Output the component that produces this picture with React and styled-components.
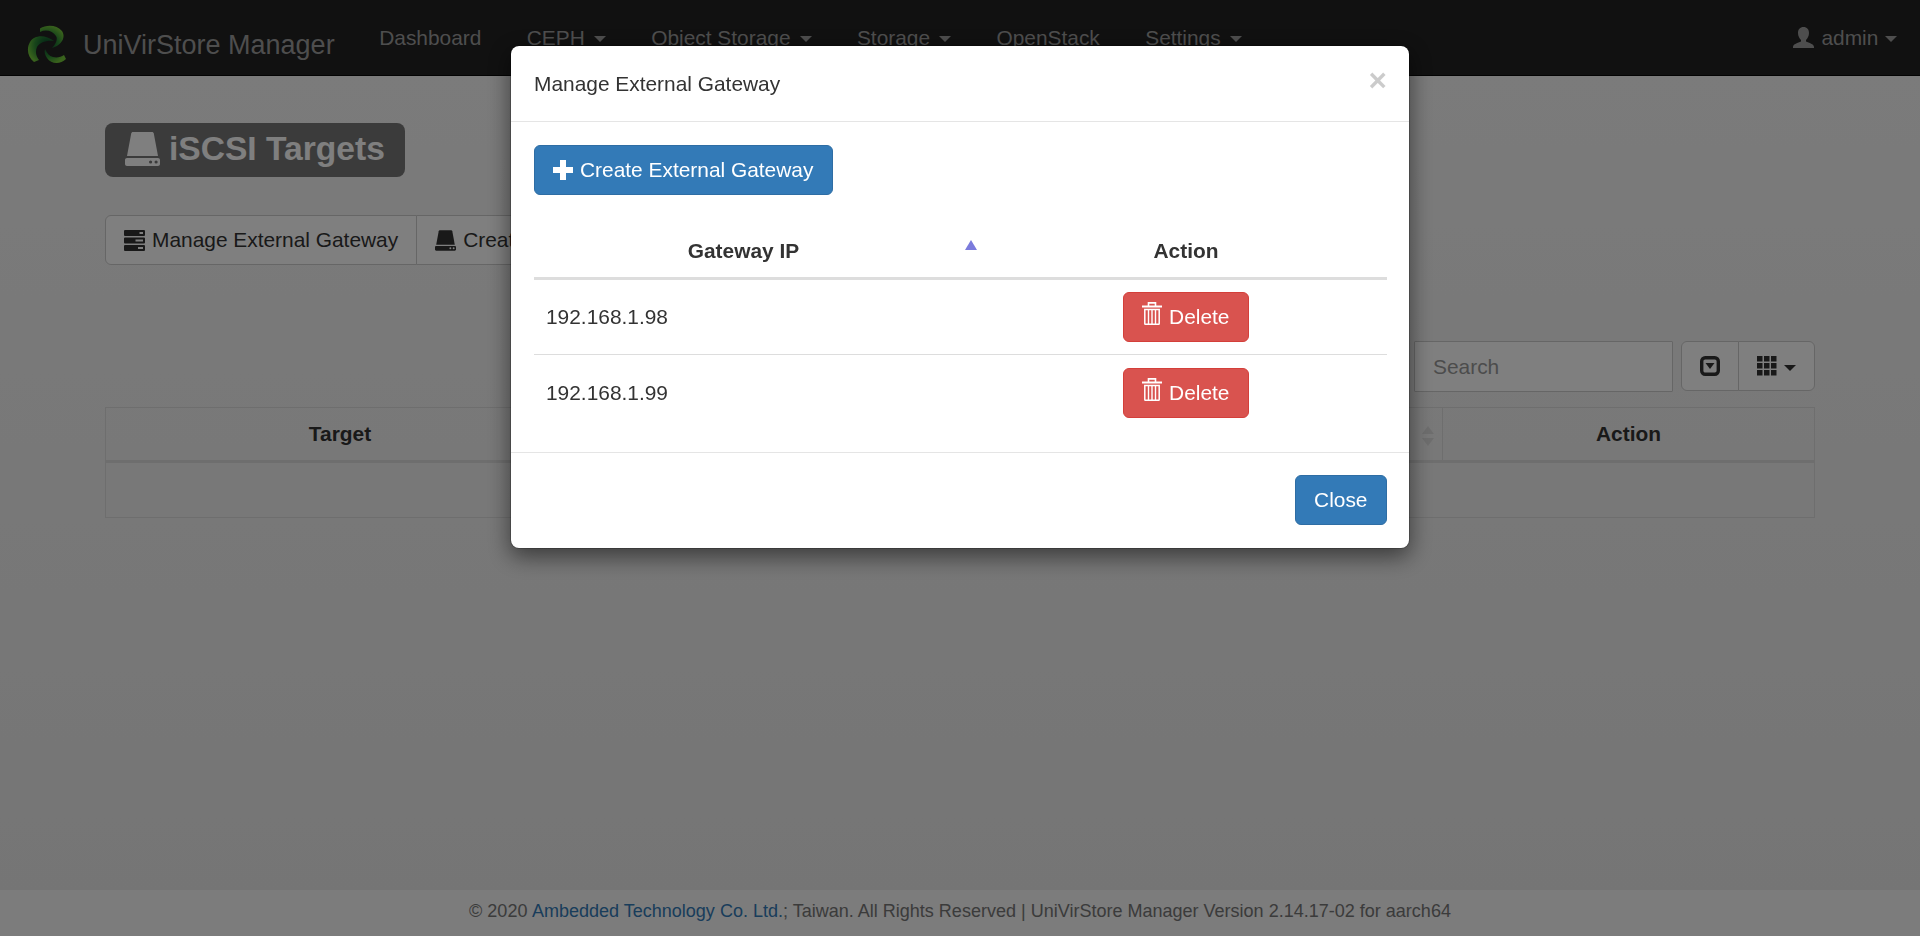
import React from "react";
import styled, { createGlobalStyle } from "styled-components";

const Global = createGlobalStyle`
  html, body { margin: 0; padding: 0; height: 100%; }
  body {
    font-family: "Liberation Sans", Arial, sans-serif;
    font-size: 20.9px;
    line-height: 30px;
    color: #333;
    background: #f5f5f5;
    overflow: hidden;
  }
  * { box-sizing: border-box; }
`;

const Page = styled.div`
  min-height: 936px;
  display: flex;
  flex-direction: column;
`;

const Navbar = styled.nav`
  height: 76px;
  background: #222;
  border-bottom: 1px solid #080808;
  display: flex;
  align-items: flex-start;
`;

const Brand = styled.a`
  display: flex;
  align-items: center;
  height: 75px;
  padding: 14px 0 0 27px;
  gap: 16px;
  color: #9d9d9d;
  font-size: 27px;
  width: 356.5px;
  white-space: nowrap;
`;

const NavList = styled.ul`
  display: flex;
  list-style: none;
  margin: 0;
  padding: 0;
  flex: 1;
`;

const NavItem = styled.li`
  padding: 22.5px 22.7px;
  color: #9d9d9d;
  display: flex;
  align-items: center;
  gap: ${(p) => (p.$gap ? p.$gap : 9)}px;
  white-space: nowrap;
`;

const Caret = styled.span`
  display: inline-block;
  width: 0;
  height: 0;
  margin-top: 3px;
  border-top: 6px solid ${(p) => p.$color || "currentColor"};
  border-left: 6px solid transparent;
  border-right: 6px solid transparent;
`;

const Main = styled.main`
  flex: 1;
  padding: 47px 105px 0;
  background: linear-gradient(#f6f6f6, #ebebeb);
`;

const TitleLabel = styled.h1`
  display: inline-flex;
  align-items: center;
  gap: 9px;
  height: 54px;
  margin: 0;
  padding: 0 20px 2px;
  border-radius: 8px;
  background: #777;
  color: #fff;
  font-size: 33.6px;
  font-weight: 700;
  vertical-align: top;
`;

const ActionGroup = styled.div`
  display: flex;
  margin-top: 38px;
  height: 50px;
`;

const GroupButton = styled.button`
  display: flex;
  align-items: center;
  gap: 7px;
  height: 50px;
  padding: 0 18px;
  margin-left: -1px;
  background: #fff;
  border: 1px solid #ccc;
  color: #333;
  font: inherit;
  white-space: nowrap;
  &:first-child { margin-left: 0; border-radius: 6px 0 0 6px; }
  &:last-child { border-radius: 0 6px 6px 0; }
`;

const Toolbar = styled.div`
  display: flex;
  justify-content: flex-end;
  align-items: flex-start;
  gap: 8px;
  margin-top: 76px;
`;

const SearchInput = styled.input`
  width: 259px;
  height: 51px;
  padding: 0 18px;
  background: #fff;
  border: 1px solid #ccc;
  border-radius: 1px;
  color: #555;
  font: inherit;
  &::placeholder { color: #999; opacity: 1; }
`;

const ToolGroup = styled.div`
  display: flex;
  height: 50px;
`;

const ToolButton = styled.button`
  display: flex;
  align-items: center;
  justify-content: center;
  gap: 7px;
  width: ${(p) => p.$width}px;
  height: 50px;
  margin-left: -1px;
  padding: 0;
  background: #fff;
  border: 1px solid #ccc;
  color: #333;
  &:first-child { margin-left: 0; border-radius: 6px 0 0 6px; }
  &:last-child { border-radius: 0 6px 6px 0; }
`;

const TargetTable = styled.table`
  width: 100%;
  margin-top: 15px;
  border-collapse: collapse;
  table-layout: fixed;
  border: 1px solid #ddd;
`;

const TargetHead = styled.th`
  position: relative;
  width: ${(p) => p.$width || "auto"};
  height: 54px;
  padding: 0;
  border: 1px solid #ddd;
  border-bottom: 3px solid #ddd;
  font-weight: 700;
  text-align: center;
`;

const TargetCell = styled.td`
  height: 56px;
  border: 1px solid #ddd;
`;

const SortBoth = styled.svg`
  position: absolute;
  right: 8px;
  top: 18px;
`;

const Footer = styled.footer`
  height: 46px;
  padding-bottom: 5px;
  background: #f8f8f8;
  display: flex;
  align-items: center;
  justify-content: center;
  font-size: 18.03px;
  color: #777;
  white-space: nowrap;
`;

const FooterLink = styled.a`
  color: #337ab7;
  margin-left: 0.25em;
`;

const Backdrop = styled.div`
  position: fixed;
  inset: 0;
  background: #000;
  opacity: 0.5;
`;

const Modal = styled.div`
  position: fixed;
  top: 45px;
  left: 510px;
  width: 900px;
  background: #fff;
  background-clip: padding-box;
  border: 1px solid rgba(0, 0, 0, 0.2);
  border-radius: 9px;
  box-shadow: 0 7.5px 22.5px rgba(0, 0, 0, 0.5);
`;

const ModalHeader = styled.header`
  display: flex;
  justify-content: space-between;
  align-items: center;
  height: 76px;
  padding: 0 22px 0 23px;
  border-bottom: 1px solid #e5e5e5;
`;

const ModalTitle = styled.h4`
  margin: 0;
  font-size: 20.9px;
  font-weight: 400;
  color: #333;
`;

const CloseX = styled.button`
  padding: 0;
  margin-top: -5px;
  background: none;
  border: 0;
  color: #000;
  opacity: 0.2;
  font-family: inherit;
  font-size: 31.5px;
  font-weight: 700;
  line-height: 1;
`;

const ModalBody = styled.div`
  padding: 23px 22px 22px 23px;
`;

const Button = styled.button`
  display: inline-flex;
  align-items: center;
  gap: ${(p) => p.$gap || 0}px;
  height: 50px;
  padding: 0 18.5px 0 18px;
  background: ${(p) => (p.$danger ? "#d9534f" : "#337ab7")};
  border: 1px solid ${(p) => (p.$danger ? "#d43f3a" : "#2e6da4")};
  border-radius: 6px;
  color: #fff;
  font: inherit;
  white-space: nowrap;
`;

const GatewayTable = styled.table`
  width: 100%;
  margin-top: 28px;
  border-collapse: collapse;
  table-layout: fixed;
`;

const GatewayHead = styled.th`
  position: relative;
  width: ${(p) => p.$width || "auto"};
  height: 55px;
  padding: 2px ${(p) => p.$right || 12}px 0 12px;
  border-bottom: 3px solid #ddd;
  font-weight: 700;
  text-align: center;
`;

const SortAsc = styled.svg`
  position: absolute;
  left: 431px;
  top: 17px;
`;

const GatewayRow = styled.tr`
  border-bottom: 1px solid #ddd;
  &:last-child { border-bottom: 0; }
`;

const GatewayCell = styled.td`
  height: 76px;
  padding: 1px 12px 0;
  text-align: ${(p) => p.$align || "left"};
  vertical-align: middle;
`;

const ModalFooter = styled.div`
  display: flex;
  justify-content: flex-end;
  padding: 22px 22px 23px 23px;
  border-top: 1px solid #e5e5e5;
`;

const RaisedIcon = styled.svg`
  margin-bottom: 7px;
`;

const Logo = () => (
  <svg width="40" height="40" viewBox="0 0 40 40" aria-hidden="true">
    <defs>
      <radialGradient id="swirl" gradientUnits="userSpaceOnUse" cx="20" cy="20" r="20">
        <stop offset="0.1" stopColor="#0a4a2c" />
        <stop offset="0.6" stopColor="#2f8a35" />
        <stop offset="1" stopColor="#74c63a" />
      </radialGradient>
    </defs>
    <path fill="url(#swirl)" d="M13 3.500C20-1 30 0 35 6c4 6 0 14-10 17 4-4 6-9 4-12-3-5-10-7-16-4z" />
    <path fill="url(#swirl)" d="M7 37C1 32-1 24 3 17c4-7 15-8 24-1-7-1-14 1-17 6-2 5-1 9 2 13z" />
    <path fill="url(#swirl)" d="M39 34c-6 6-15 5-19-1-2-3-3-6-2-9 2 4 4 7 8 8 4 1 8 0 11-2z" />
  </svg>
);

const HddIcon = ({ size, height }) => (
  <svg width={size} height={height} viewBox="0 0 35 34" fill="currentColor" aria-hidden="true">
    <path d="M8 0h19c1 0 1.600.6 1.800 1.500L33 24H2L6.200 1.500C6.400.6 7 0 8 0z" />
    <path fillRule="evenodd" d="M2 26h31c1.100 0 2 .9 2 2v4c0 1.100-.9 2-2 2H2c-1.100 0-2-.9-2-2v-4c0-1.100.9-2 2-2zm22 4a1.600 1.600 0 1 0 3.200 0 1.600 1.600 0 1 0-3.200 0zm5.500 0a1.600 1.600 0 1 0 3.200 0 1.600 1.600 0 1 0-3.200 0z" />
  </svg>
);

const ServerIcon = () => (
  <svg width="21" height="21" viewBox="0 0 21 21" fill="#333" aria-hidden="true">
    <path fillRule="evenodd" d="M1 0h19a1 1 0 0 1 1 1v4a1 1 0 0 1-1 1H1a1 1 0 0 1-1-1V1a1 1 0 0 1 1-1zm14.500 2v2H19V2z" />
    <path fillRule="evenodd" d="M1 7.500h19a1 1 0 0 1 1 1v4a1 1 0 0 1-1 1H1a1 1 0 0 1-1-1v-4a1 1 0 0 1 1-1zm10.500 2v2H19v-2z" />
    <path fillRule="evenodd" d="M1 15h19a1 1 0 0 1 1 1v4a1 1 0 0 1-1 1H1a1 1 0 0 1-1-1v-4a1 1 0 0 1 1-1zm13 2v2h5v-2z" />
  </svg>
);

const PlusIcon = () => (
  <svg width="20" height="20" viewBox="0 0 20 20" fill="#fff" aria-hidden="true">
    <path d="M7 0h6v7h7v6h-7v7H7v-7H0V7h7z" />
  </svg>
);

const TrashIcon = () => (
  <RaisedIcon width="20" height="23" viewBox="0 0 20 23" fill="none" stroke="#fff" aria-hidden="true">
    <path strokeWidth="1.600" d="M6.500 4V.9h7V4" />
    <path strokeWidth="2" d="M0 4.500h20" />
    <path strokeWidth="1.500" d="M2.800 7.500h14.400v14.200c0 .4-.3.600-.6.600H3.400c-.3 0-.6-.2-.6-.6z" />
    <path strokeWidth="1.400" d="M6.500 8v14M10 8v14M13.500 8v14" />
  </RaisedIcon>
);

const UserIcon = () => (
  <svg width="21" height="21" viewBox="0 0 21 21" fill="currentColor" aria-hidden="true">
    <path d="M10.500 0C7 0 5 2.500 5 6c0 3 1.500 5.500 3 7v1.500C5 16 0 17 0 20v1h21v-1c0-3-5-4-8-5.500V13c1.500-1.500 3-4 3-7 0-3.500-2-6-5.500-6z" />
  </svg>
);

const CollapseIcon = () => (
  <svg width="20" height="20" viewBox="0 0 20 20" aria-hidden="true">
    <rect x="1.700" y="1.700" width="16.600" height="16.600" rx="3.500" fill="none" stroke="#333" strokeWidth="3.400" />
    <path fill="#333" d="M5.500 7h9L10 13z" />
  </svg>
);

const GridIcon = () => (
  <svg width="20" height="20" viewBox="0 0 20 20" fill="#333" aria-hidden="true">
    {[0, 7, 14].map((y) =>
      [0, 7, 14].map((x) => <rect key={`${x}-${y}`} x={x} y={y} width="5.500" height="5.500" />)
    )}
  </svg>
);

export default function App() {
  return (
    <>
      <Global />
      <Page>
        <Navbar>
          <Brand>
            <Logo />
            UniVirStore Manager
          </Brand>
          <NavList>
            <NavItem>Dashboard</NavItem>
            <NavItem>CEPH <Caret /></NavItem>
            <NavItem>Object Storage <Caret /></NavItem>
            <NavItem>Storage <Caret /></NavItem>
            <NavItem>OpenStack</NavItem>
            <NavItem>Settings <Caret /></NavItem>
          </NavList>
          <NavItem $gap={7}>
            <UserIcon />
            admin
            <Caret />
          </NavItem>
        </Navbar>

        <Main>
          <TitleLabel>
            <HddIcon size={35} height={34} />
            iSCSI Targets
          </TitleLabel>
          <ActionGroup>
            <GroupButton><ServerIcon />Manage External Gateway</GroupButton>
            <GroupButton><HddIcon size={21} height={21} />Create</GroupButton>
          </ActionGroup>
          <Toolbar>
            <SearchInput placeholder="Search" />
            <ToolGroup>
              <ToolButton $width={58}><CollapseIcon /></ToolButton>
              <ToolButton $width={77}><GridIcon /><Caret $color="#333" /></ToolButton>
            </ToolGroup>
          </Toolbar>
          <TargetTable>
            <thead>
              <tr>
                <TargetHead $width="469px">Target</TargetHead>
                <TargetHead>
                  <SortBoth width="12" height="20" viewBox="0 0 12 20" fill="#ddd">
                    <path d="M6 0l6 8H0zM0 12h12l-6 8z" />
                  </SortBoth>
                </TargetHead>
                <TargetHead $width="372px">Action</TargetHead>
              </tr>
            </thead>
            <tbody>
              <tr><TargetCell colSpan={3} /></tr>
            </tbody>
          </TargetTable>
        </Main>

        <Footer>
          © 2020<FooterLink>Ambedded Technology Co. Ltd.</FooterLink>; Taiwan. All Rights Reserved | UniVirStore Manager Version 2.14.17-02 for aarch64
        </Footer>
      </Page>

      <Backdrop />
      <Modal>
        <ModalHeader>
          <ModalTitle>Manage External Gateway</ModalTitle>
          <CloseX>×</CloseX>
        </ModalHeader>
        <ModalBody>
          <Button $gap={7}><PlusIcon />Create External Gateway</Button>
          <GatewayTable>
            <thead>
              <tr>
                <GatewayHead $width="451px" $right={44}>
                  Gateway IP
                  <SortAsc width="12" height="10" viewBox="0 0 12 10" fill="#7b7bdc">
                    <path d="M6 0l6 10H0z" />
                  </SortAsc>
                </GatewayHead>
                <GatewayHead>Action</GatewayHead>
              </tr>
            </thead>
            <tbody>
              {["192.168.1.98", "192.168.1.99"].map((ip) => (
                <GatewayRow key={ip}>
                  <GatewayCell>{ip}</GatewayCell>
                  <GatewayCell $align="center">
                    <Button $danger $gap={7}><TrashIcon />Delete</Button>
                  </GatewayCell>
                </GatewayRow>
              ))}
            </tbody>
          </GatewayTable>
        </ModalBody>
        <ModalFooter>
          <Button>Close</Button>
        </ModalFooter>
      </Modal>
    </>
  );
}
